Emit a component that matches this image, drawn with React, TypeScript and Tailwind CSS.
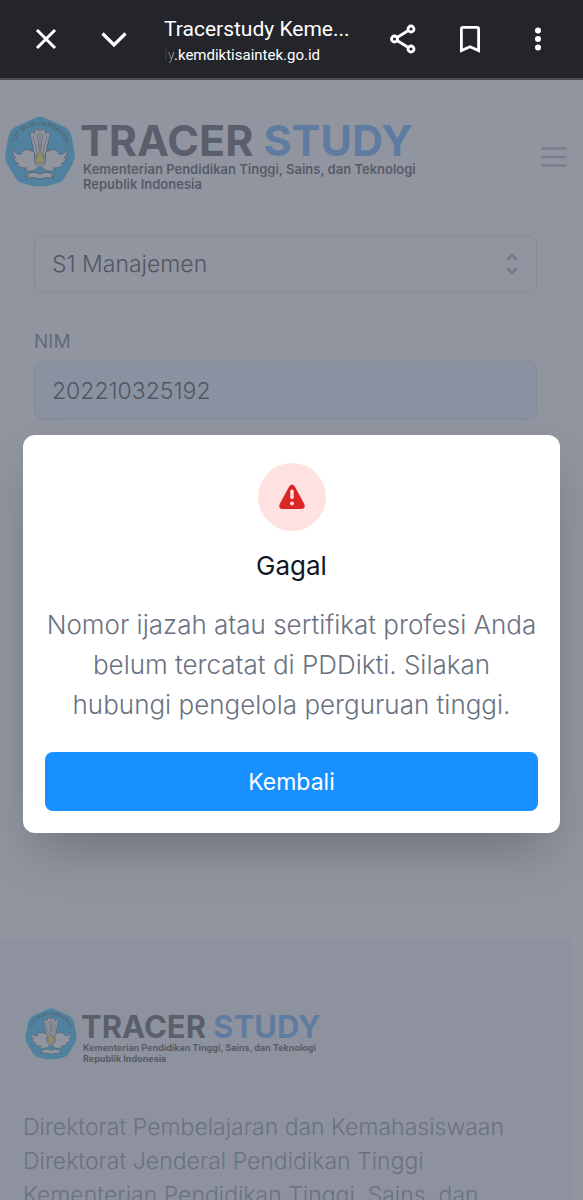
import React, { useState } from 'react';

const Emblem = ({ className, id }: { className: string; id: string }) => (
  <svg viewBox="0 0 70 71" className={className} aria-hidden="true">
    <defs>
      <path id={id} d="M9 29 C12 16 25 9.500 35 9.500 C45 9.500 58 16 61 29" />
    </defs>
    <path
      d="M31 1.500 Q35 -0.500 39 1.500 L60 11 Q65 14 66.500 20 L69.500 37 Q70.500 42 68 47 L59.500 62 Q57 66 52 67.500 Q35 73 18 67.500 Q13 66 10.500 62 L1.500 47 Q-0.500 42 0.500 37 L3.500 20 Q5 14 10 11 Z"
      fill="#00b4ff"
    />
    <text fontSize="6" fontWeight="600" fill="#10303f" fontFamily="Inter, sans-serif">
      <textPath href={`#${id}`} startOffset="50%" textAnchor="middle">
        TUT WURI HANDAYANI
      </textPath>
    </text>
    <g fill="#ffffff" stroke="#27333d" strokeWidth="0.8" strokeLinejoin="round">
      {/* Tail feathers */}
      <path d="M30 41 L25 18 Q27 14 29.500 18 L30 14 Q32 11 33.500 15 Q35 10 36.500 15 Q38 11 40 14 L40.500 18 Q43 14 45 18 L40 41 Z" />
      {/* Wings */}
      <path d="M30 37 C24 32 17 33 16 38 C12 39 9 36 8 33 C7 37 9 40 11 42 L8.500 42 C10 46 12 47 14 47.500 L12 48.500 C15 52 19 52 22 52 L19 54 C26 57 32 54 34 50 C29 47 29 42 30 37 Z" />
      <path d="M40 37 C46 32 53 33 54 38 C58 39 61 36 62 33 C63 37 61 40 59 42 L61.500 42 C60 46 58 47 56 47.500 L58 48.500 C55 52 51 52 48 52 L51 54 C44 57 38 54 36 50 C41 47 41 42 40 37 Z" />
      {/* Open book */}
      <path d="M20 60 Q27 54 35 58 Q43 54 50 60 L46 60 Q49 62 50 63 Q41 60 35 63 Q29 60 20 63 Q21 61 24 60 Z" />
    </g>
    <path d="M32 18 L34 33 M35 15 V32 M38 18 L36 33 M28 20 L32 36 M42 20 L38 36" stroke="#27333d" strokeWidth="0.700" fill="none" />
    <ellipse cx="35" cy="44" rx="5.500" ry="7" fill="#e8edf0" stroke="#27333d" strokeWidth="0.8" />
    <path d="M35 33 C36 38 39.500 41 39 45 C38.500 49 31.500 49 31 45 C30.500 41 34 38 35 33 Z" fill="#ffe600" stroke="#4a4a20" strokeWidth="0.600" />
  </svg>
);

const Logo = ({ small = false }: { small?: boolean }) => (
  <a href="#" className={`flex items-start font-[Inter,sans-serif] ${small ? 'gap-1' : 'gap-[5px]'}`}>
    <Emblem id={small ? 'motto-footer' : 'motto-header'} className={small ? 'h-[52px] w-[52px]' : 'h-[71px] w-[70px]'} />
    <span className="block whitespace-nowrap">
      <span
        className={`block font-bold text-[#2a2a2e] ${
          small ? 'pt-1 text-[31px] leading-[29px]' : 'pt-[3px] text-[43px] leading-[43px]'
        }`}
      >
        TRACER <span className="text-[#3f9dff]">STUDY</span>
      </span>
      <span
        className={`block text-[#141416] ${
          small
            ? 'pl-[2px] pt-px text-[9px] leading-[11px] font-bold'
            : 'pl-[3px] text-[13px] leading-[15px] font-semibold'
        }`}
      >
        Kementerian Pendidikan Tinggi, Sains, dan Teknologi
        <br />
        Republik Indonesia
      </span>
    </span>
  </a>
);

const BrowserBar = () => (
  <header className="flex h-20 shrink-0 items-center border-b-2 border-[#4b4c53] bg-[#24252b] text-white">
    <button aria-label="Close" className="ml-[34px] shrink-0">
      <svg viewBox="0 0 24 24" className="h-6 w-6" fill="none" stroke="currentColor" strokeWidth="3">
        <path d="M3 3 L21 21 M21 3 L3 21" />
      </svg>
    </button>
    <button aria-label="Minimize" className="ml-[42px] shrink-0">
      <svg viewBox="0 0 28 24" className="h-6 w-7" fill="none" stroke="currentColor" strokeWidth="3.200">
        <path d="M2.500 6.500 L14 18 L25.500 6.500" />
      </svg>
    </button>
    <div className="ml-9 min-w-0 flex-1 pt-[3px] font-[Roboto,sans-serif]">
      <div className="truncate text-[21px] leading-[28px]">Tracerstudy Keme...</div>
      <div className="text-[15px] leading-[24px]">
        <span className="bg-linear-to-r from-transparent to-[#9a9ba0] bg-clip-text text-transparent">ly</span>
        .kemdiktisaintek.go.id
      </div>
    </div>
    <button aria-label="Share" className="shrink-0">
      <svg viewBox="0 0 28 30" className="h-[30px] w-7" fill="none" stroke="currentColor" strokeWidth="2.800">
        <path d="M8 13.500 L18.500 7 M8 16.500 L18.500 23" />
        <circle cx="5.500" cy="15" r="3" />
        <circle cx="22" cy="5" r="3" />
        <circle cx="22" cy="25" r="3" />
      </svg>
    </button>
    <button aria-label="Bookmark" className="ml-[42px] shrink-0">
      <svg viewBox="0 0 22 28" className="h-7 w-[22px]" fill="none" stroke="currentColor" strokeWidth="2.800">
        <path d="M2.400 25.500 V4 Q2.400 2.400 4 2.400 H18 Q19.600 2.400 19.600 4 V25.500 L11 21.800 Z" />
      </svg>
    </button>
    <button aria-label="More" className="mr-[41px] ml-[53px] shrink-0">
      <svg viewBox="0 0 8 24" className="h-6 w-2" fill="currentColor">
        <circle cx="4" cy="3.500" r="3" />
        <circle cx="4" cy="12" r="3" />
        <circle cx="4" cy="20.500" r="3" />
      </svg>
    </button>
  </header>
);

const App = () => {
  const [open, setOpen] = useState(true);
  const [nim, setNim] = useState('202210325192');

  return (
    <div className="flex h-screen flex-col overflow-hidden bg-white font-[Inter,sans-serif]">
      <BrowserBar />

      <div className="relative min-h-0 flex-1 overflow-hidden">
        <div className="flex h-[155px] items-start justify-between pt-9 pr-4 pl-[5px]">
          <Logo />
          <button aria-label="Menu" className="mt-[29px]">
            <svg viewBox="0 0 26 24" className="h-6 w-[26px]" stroke="#a0a4ac" strokeWidth="2.500" strokeLinecap="round">
              <path d="M1.500 3.500 H24.500 M1.500 12 H24.500 M1.500 20.500 H24.500" />
            </svg>
          </button>
        </div>

        <form className="mr-[10px] h-[655px] rounded-b-[40px] pr-9 pl-[34px] font-light shadow-[0_1px_3px_rgba(0,0,0,0.04)]">
          <div className="relative">
            <select
              aria-label="Program Studi"
              className="h-[58px] w-full appearance-none rounded-lg border border-gray-300 bg-white px-[17px] text-[23px] text-black"
            >
              <option>S1 Manajemen</option>
            </select>
            <svg
              viewBox="0 0 14 22"
              className="pointer-events-none absolute top-[18px] right-[18px] h-[22px] w-[14px]"
              fill="none"
              stroke="#8b919c"
              strokeWidth="2.500"
            >
              <path d="M2 7 L7 2 L12 7 M2 15 L7 20 L12 15" />
            </svg>
          </div>
          <label htmlFor="nim" className="mt-8 block text-[19px] leading-[34px] font-normal text-gray-600">
            NIM
          </label>
          <input
            id="nim"
            value={nim}
            onChange={(e) => setNim(e.target.value)}
            className="mt-[2px] block h-[59px] w-full rounded-lg border border-gray-300 bg-[#e8f0fe] px-[17px] text-[23px] text-black"
          />
        </form>

        <footer className="mt-12 mr-3 bg-gray-100 pt-[70px] pb-10 pl-[23px]">
          <div className="pl-[2px]">
            <Logo small />
          </div>
          <p className="mt-[46px] text-[23px] leading-[34px] font-light whitespace-nowrap text-gray-500">
            Direktorat Pembelajaran dan Kemahasiswaan
            <br />
            Direktorat Jenderal Pendidikan Tinggi
            <br />
            Kementerian Pendidikan Tinggi, Sains, dan
          </p>
        </footer>

        {open && (
          <div className="absolute inset-0 flex items-center justify-center bg-[#6b7280]/75 px-[23px] pb-3">
            <div
              role="dialog"
              aria-labelledby="dialog-title"
              className="w-full rounded-xl bg-white px-[22px] pt-7 pb-[22px] text-center shadow-2xl"
            >
              <div className="mx-auto flex h-[68px] w-[68px] items-center justify-center rounded-full bg-[#fee2e2]">
                <svg viewBox="0 0 26 26" className="h-[26px] w-[26px]" aria-hidden="true">
                  <path
                    d="M10.200 2.400 Q13 -1.200 15.800 2.400 L25.200 19.800 Q27 24.800 22.500 25 H3.500 Q-1 24.800 0.800 19.800 Z"
                    fill="#dc2626"
                  />
                  <rect x="11.300" y="5.500" width="3.400" height="9.500" rx="1.500" fill="#fee2e2" />
                  <circle cx="13" cy="19.500" r="2" fill="#fee2e2" />
                </svg>
              </div>
              <h2 id="dialog-title" className="mt-[18px] text-[26px] leading-[34px] text-gray-900">
                Gagal
              </h2>
              <p className="mt-[22px] text-[26px] leading-[40px] font-light text-gray-500">
                Nomor ijazah atau sertifikat profesi Anda belum tercatat di PDDikti. Silakan hubungi pengelola
                perguruan tinggi.
              </p>
              <button
                onClick={() => setOpen(false)}
                className="mt-[27px] h-[59px] w-full rounded-lg bg-[#1890ff] pt-[2px] text-[23px] text-white"
              >
                Kembali
              </button>
            </div>
          </div>
        )}
      </div>
    </div>
  );
};

export default App;
